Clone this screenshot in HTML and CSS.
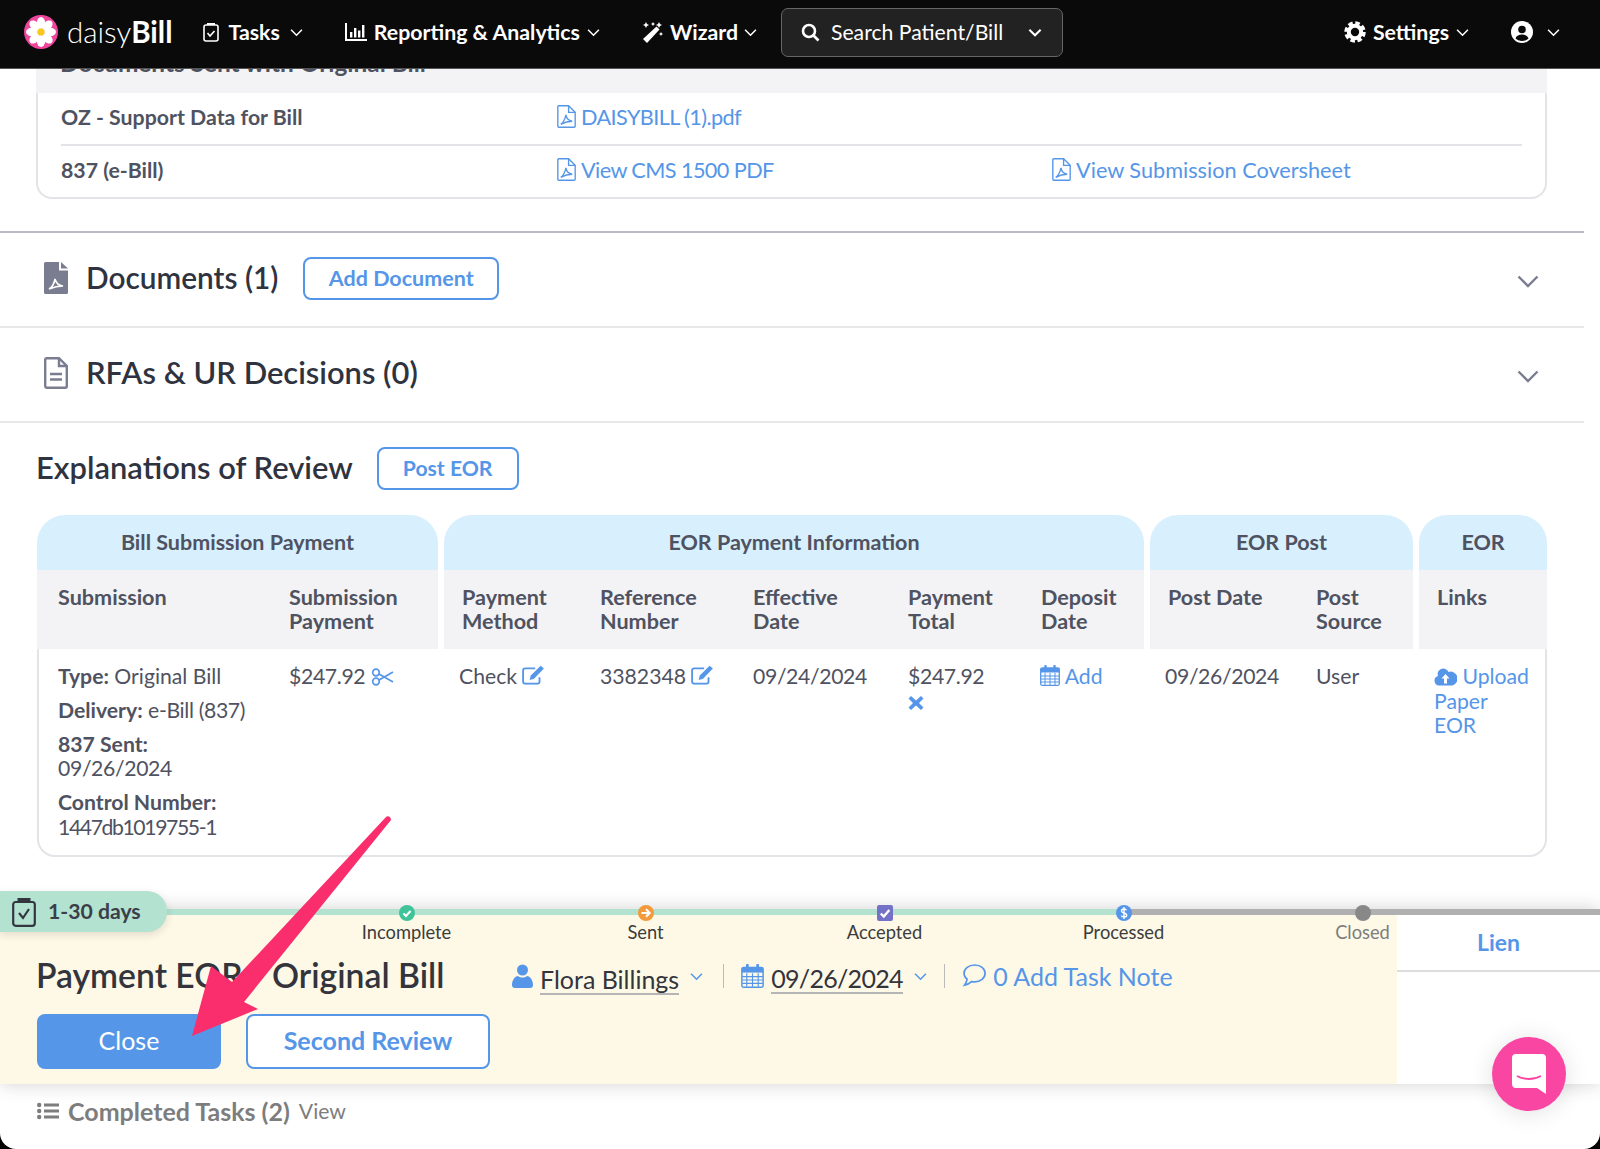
FILE: index.html
```html
<!DOCTYPE html>
<html>
<head>
    <meta charset="utf-8" />
    <title>daisyBill - Bill</title>
    <link rel="stylesheet" href="styles.css">
</head>
<body>
<div class="page">
    <nav class="navbar">
        <a class="brand">
            <svg class="logo" viewBox="0 0 34 34">
                <circle cx="17" cy="17" r="17" fill="#f0459d"/>
                <g fill="#fff">
                    <ellipse cx="17" cy="8" rx="4.2" ry="6"/>
                    <ellipse cx="17" cy="26" rx="4.2" ry="6"/>
                    <ellipse cx="8" cy="17" rx="6" ry="4.2"/>
                    <ellipse cx="26" cy="17" rx="6" ry="4.2"/>
                    <ellipse cx="10.6" cy="10.6" rx="4.2" ry="6" transform="rotate(-45 10.6 10.6)"/>
                    <ellipse cx="23.4" cy="10.6" rx="4.2" ry="6" transform="rotate(45 23.4 10.6)"/>
                    <ellipse cx="10.6" cy="23.4" rx="4.2" ry="6" transform="rotate(45 10.6 23.4)"/>
                    <ellipse cx="23.4" cy="23.4" rx="4.2" ry="6" transform="rotate(-45 23.4 23.4)"/>
                </g>
                <circle cx="17" cy="17" r="3.6" fill="#f7c91c"/>
            </svg>
            <span class="brand-name">daisy<b>Bill</b></span>
        </a>
        <a class="nav-item nav-tasks">
            <svg width="16" height="20" viewBox="0 0 16 20" fill="none" stroke="#fff" stroke-width="1.6"><rect x="1" y="3" width="14" height="16" rx="2"/><path d="M5 3V2h6v1" stroke-width="2"/><path d="M4.5 11l2.5 3 4.5-5"/></svg>
            Tasks
            <svg class="chev" viewBox="0 0 12 8"><path d="M1 1.5l5 5 5-5"/></svg>
        </a>
        <a class="nav-item nav-reports">
            <svg width="22" height="18" viewBox="0 0 22 18" fill="#fff"><path d="M0 0h2v16h20v2H0z"/><path d="M5 9h2.4v5.5H5zM9 5h2.4v9.500H9zM13 7.500h2.400v7H13zM17 2h2.400v12.500H17z"/></svg>
            Reporting &amp; Analytics
            <svg class="chev" viewBox="0 0 12 8"><path d="M1 1.5l5 5 5-5"/></svg>
        </a>
        <a class="nav-item nav-wizard">
            <svg width="23" height="23" viewBox="0 0 23 23" fill="#fff"><path d="M15.500 5.500l3 3L6 22l-4-4z"/><path d="M5 1l1 2 2 1-2 1-1 2-1-2-2-1 2-1zM12 1l.7 1.300L14 3l-1.300.7L12 5l-.7-1.300L10 3l1.300-.7zM20 11l.7 1.300L22 13l-1.300.7L20 15l-.7-1.300L18 13l1.300-.7z"/><path d="M18 1l1 2 2 1-2 1-1 2-1-2-2-1 2-1z"/></svg>
            Wizard
            <svg class="chev" viewBox="0 0 12 8"><path d="M1 1.5l5 5 5-5"/></svg>
        </a>
        <div class="nav-search">
            <svg width="19" height="19" viewBox="0 0 19 19" fill="none" stroke="#fff" stroke-width="2.600"><circle cx="8" cy="8" r="6"/><path d="M12.500 12.500l5 5"/></svg>
            <span>Search Patient/Bill</span>
            <svg class="chev chev-search" viewBox="0 0 12 8"><path d="M1 1.5l5 5 5-5"/></svg>
        </div>
        <a class="nav-item nav-settings">
            <svg width="22" height="22" viewBox="0 0 22 22"><circle cx="11" cy="11" r="6.200" fill="none" stroke="#fff" stroke-width="4"/><circle cx="11" cy="11" r="9" fill="none" stroke="#fff" stroke-width="3.500" stroke-dasharray="4.500 2.570"/></svg>
            Settings
            <svg class="chev" viewBox="0 0 12 8"><path d="M1 1.5l5 5 5-5"/></svg>
        </a>
        <a class="nav-item nav-user">
            <svg width="22" height="22" viewBox="0 0 22 22"><circle cx="11" cy="11" r="11" fill="#fff"/><circle cx="11" cy="8.500" r="3.800" fill="#0a0a0a"/><path d="M4.500 17.500c1-3 3.500-4 6.500-4s5.500 1 6.500 4c-1.700 1.500-4 2.500-6.500 2.500s-4.800-1-6.500-2.500z" fill="#0a0a0a"/></svg>
            <svg class="chev" viewBox="0 0 12 8"><path d="M1 1.5l5 5 5-5"/></svg>
        </a>
    </nav>

    <main class="content">
        <div class="doc-card">
            <div class="doc-card-head">Documents Sent with Original Bill</div>
            <div class="doc-row doc-row-line">
                <strong>OZ - Support Data for Bill</strong>
                <a class="link tight"><svg class="pdf-icon" viewBox="0 0 18 22"><use href="#pdf-outline"/></svg>DAISYBILL (1).pdf</a>
            </div>
            <div class="doc-row doc-row-last">
                <strong>837 (e-Bill)</strong>
                <a class="link tight"><svg class="pdf-icon" viewBox="0 0 18 22"><use href="#pdf-outline"/></svg>View CMS 1500 PDF</a>
                <a class="link"><svg class="pdf-icon" viewBox="0 0 18 22"><use href="#pdf-outline"/></svg>View Submission Coversheet</a>
            </div>
        </div>

        <section class="fold fold-first">
            <svg class="fold-icon" viewBox="0 0 24 32"><path d="M1.500 0H15v8.500h9V30.500a1.500 1.500 0 0 1-1.500 1.500h-21A1.500 1.500 0 0 1 0 30.500V1.500A1.500 1.500 0 0 1 1.500 0zM17 0l7 6.500h-7z" fill="#7a7d90"/><path d="M5 27c3-1.500 5-5 6-10 1 4 3 6.500 8 7-4 0-8 .5-14 3z" fill="none" stroke="#fff" stroke-width="1.600"/></svg>
            <h2 class="h2-docs">Documents (1)</h2>
            <a class="btn-outline btn-doc">Add Document</a>
            <svg class="fold-chev" viewBox="0 0 22 13"><path d="M1.500 1.500L11 11l9.500-9.500"/></svg>
        </section>
        <section class="fold">
            <svg class="fold-icon" viewBox="0 0 24 32" fill="none" stroke="#7a7d90" stroke-width="2.400"><path d="M2.500 1.200H15L22.800 9v20.300a1.500 1.500 0 0 1-1.500 1.500H2.500A1.500 1.500 0 0 1 1.200 29.300V2.700a1.500 1.500 0 0 1 1.300-1.500z"/><path d="M15 1.200V9h7.800M6 17h12M6 22.500h12"/></svg>
            <h2>RFAs &amp; UR Decisions (0)</h2>
            <svg class="fold-chev" viewBox="0 0 22 13"><path d="M1.500 1.500L11 11l9.500-9.500"/></svg>
        </section>

        <section class="eor">
            <div class="eor-title">
                <h2>Explanations of Review</h2>
                <a class="btn-outline">Post EOR</a>
            </div>
            <div class="eor-table">
                <div class="eor-group group-bill">
                    <div class="group-head">Bill Submission Payment</div>
                    <div class="group-sub"><span>Submission</span><span>Submission Payment</span></div>
                    <div class="group-body">
                        <div class="meta">
                            <p><strong>Type:</strong> Original Bill</p>
                            <p><strong>Delivery:</strong> <span class="num">e-Bill (837)</span></p>
                            <p><strong>837 Sent:</strong><br><span class="num">09/26/2024</span></p>
                            <p><strong>Control Number:</strong><br><span class="num-tight">1447db1019755-1</span></p>
                        </div>
                        <div class="nowrap"><span class="num">$247.92</span>
                            <svg class="ico" width="23" height="18" viewBox="0 0 23 18" fill="none" stroke="#5596e8" stroke-width="1.700"><circle cx="5" cy="4.500" r="3.300"/><circle cx="5" cy="13.500" r="3.300"/><path d="M8 6l14 8M8 12l14-8"/></svg>
                        </div>
                    </div>
                </div>
                <div class="eor-group group-payment">
                    <div class="group-head">EOR Payment Information</div>
                    <div class="group-sub"><span>Payment Method</span><span>Reference Number</span><span>Effective Date</span><span>Payment Total</span><span>Deposit Date</span></div>
                    <div class="group-body">
                        <div class="nudge nowrap">Check <svg class="ico ico-edit" width="23" height="20" viewBox="0 0 21 18"><use href="#edit"/></svg></div>
                        <div class="nowrap">3382348 <svg class="ico ico-edit" width="23" height="20" viewBox="0 0 21 18"><use href="#edit"/></svg></div>
                        <div class="num">09/24/2024</div>
                        <div><span class="num">$247.92</span><br><svg class="ico" width="16" height="16" viewBox="0 0 16 16"><path d="M3 1l5 4.500L13 1l2.500 2.500L11 8l4.500 4.500L13 15l-5-4.500L3 15 .5 12.500 5 8 .5 3.500z" fill="#5596e8"/></svg></div>
                        <div class="deposit"><a class="link"><svg class="ico" width="20" height="21" viewBox="0 0 20 21"><use href="#calendar"/></svg> Add</a></div>
                    </div>
                </div>
                <div class="eor-group group-post">
                    <div class="group-head">EOR Post</div>
                    <div class="group-sub"><span>Post Date</span><span>Post Source</span></div>
                    <div class="group-body">
                        <div class="nudge num">09/26/2024</div>
                        <div>User</div>
                    </div>
                </div>
                <div class="eor-group group-links">
                    <div class="group-head">EOR</div>
                    <div class="group-sub"><span>Links</span></div>
                    <div class="group-body">
                        <div class="nudge"><a class="link"><svg class="ico" width="23" height="18" viewBox="0 0 23 18"><path d="M5 17.500a4.800 4.800 0 0 1-1-9.400 5.500 5.500 0 0 1 5-7.500c2.500 0 4.500 1.300 5.500 3.300A5.500 5.500 0 0 1 18.500 17.500z" fill="#5596e8"/><path d="M11.500 6l-4 4.500h2.500v5h3v-5h2.500z" fill="#fff"/></svg> Upload Paper EOR</a></div>
                    </div>
                </div>
            </div>
        </section>

        <section class="task-panel">
            <div class="track"></div>
            <div class="task-age">
                <svg width="24" height="30" viewBox="0 0 24 30" fill="none" stroke="#33363f" stroke-width="2.200"><rect x="1.200" y="5" width="21.600" height="23.800" rx="2.500"/><path d="M7 5V2.500h10V5" stroke-width="3"/><path d="M7 16l4 5 6-9"/></svg>
                1-30 days
            </div>
            <div class="task-row">
                <div class="task-main">
                    <div class="stops">
                        <div class="stop">
                            <svg viewBox="0 0 16 16"><circle cx="8" cy="8" r="8" fill="#41c39a"/><path d="M4.500 8.500l2.500 2.500 4.500-5" fill="none" stroke="#fff" stroke-width="2"/></svg>
                            Incomplete
                        </div>
                        <div class="stop">
                            <svg viewBox="0 0 16 16"><circle cx="8" cy="8" r="8" fill="#f39a3c"/><path d="M3.500 8h8M8 4.200L11.800 8 8 11.800" fill="none" stroke="#fff" stroke-width="2"/></svg>
                            Sent
                        </div>
                        <div class="stop">
                            <svg viewBox="0 0 16 16"><rect width="16" height="16" rx="2" fill="#7472c8"/><path d="M3.800 8.500l3 3 5.500-6.500" fill="none" stroke="#fff" stroke-width="2.400"/></svg>
                            Accepted
                        </div>
                        <div class="stop">
                            <svg viewBox="0 0 16 16"><circle cx="8" cy="8" r="8" fill="#5596e8"/><path d="M10.500 5.300C10 4.300 9 4 8 4 6.500 4 5.500 4.800 5.500 6S6.500 7.600 8 8s2.700 1 2.700 2.200S9.500 12 8 12c-1.100 0-2.100-.4-2.700-1.400M8 2v12" fill="none" stroke="#fff" stroke-width="1.400"/></svg>
                            Processed
                        </div>
                        <div class="stop stop-off">
                            <svg viewBox="0 0 16 16"><circle cx="8" cy="8" r="8" fill="#888"/></svg>
                            Closed
                        </div>
                    </div>
                    <div class="task-head">
                        <h1>Payment EOR - Original Bill</h1>
                        <div class="task-meta">
                            <svg class="ico" width="21" height="24" viewBox="0 0 21 24" fill="#5596e8"><circle cx="10.500" cy="6" r="5.500"/><path d="M0 21c0-5 3-9 6-9 1.300 1 2.800 1.500 4.500 1.500S13.700 13 15 12c3 0 6 4 6 9 0 2-1 3-3 3H3c-2 0-3-1-3-3z"/></svg>
                            <span class="under">Flora Billings</span>
                            <svg class="chev chev-blue" viewBox="0 0 12 8"><path d="M1 1.5l5 5 5-5"/></svg>
                            <i class="sep"></i>
                            <svg class="ico" width="23" height="24" viewBox="0 0 20 21"><use href="#calendar"/></svg>
                            <span class="under under-date">09/26/2024</span>
                            <svg class="chev chev-blue" viewBox="0 0 12 8"><path d="M1 1.5l5 5 5-5"/></svg>
                            <i class="sep sep-note"></i>
                            <a class="link"><svg class="ico" width="25" height="25" viewBox="0 0 25 25" fill="none" stroke="#5596e8" stroke-width="1.700"><path d="M12.800 2C6.800 2 2 5.600 2 10.300c0 2.300 1.200 4.400 3.100 5.900-.2 2-1.200 4-2.600 6 2.800-.6 5.300-2 7-3.600 1 .2 2.100.3 3.300.3 5.700 0 10.300-3.800 10.300-8.600S18.500 2 12.800 2z"/></svg> 0 Add Task Note</a>
                        </div>
                    </div>
                    <div class="task-actions">
                        <a class="btn-solid">Close</a>
                        <a class="btn-outline btn-big">Second Review</a>
                    </div>
                </div>
                <aside class="lien-tab">
                    <div class="lien-label">Lien</div>
                </aside>
            </div>
        </section>

        <div class="completed">
            <svg width="22" height="18" viewBox="0 0 22 18" fill="#7d7d7d"><path d="M7 1.500h15v3H7zM7 7.500h15v3H7zM7 13.500h15v3H7z"/><circle cx="2.200" cy="3" r="2.200"/><circle cx="2.200" cy="9" r="2.200"/><circle cx="2.200" cy="15" r="2.200"/></svg>
            <strong>Completed Tasks (2)</strong> <span>View</span>
        </div>
    </main>

    <svg class="pointer" width="1600" height="1149" viewBox="0 0 1600 1149"><path d="M386 817c2-2 5 0 5 3L244 1002l14 7-66 27 19-70 21 16z" fill="#fb2e6d"/></svg>

    <div class="chat-btn">
        <svg width="34" height="40" viewBox="0 0 34 40"><path d="M4 0h26a4 4 0 0 1 4 4v36l-9-6H4a4 4 0 0 1-4-4V4a4 4 0 0 1 4-4z" fill="#fff"/><path d="M5 22c7 4 17 4 24 0" fill="none" stroke="#f946a3" stroke-width="2"/></svg>
    </div>
</div>

<svg width="0" height="0" class="defs">
    <symbol id="pdf-outline" viewBox="0 0 18 22">
        <g fill="none" stroke="#5596e8" stroke-width="1.300"><path d="M1.700.7H11L17.300 7v13.300a1 1 0 0 1-1 1H1.700a1 1 0 0 1-1-1V1.700a1 1 0 0 1 1-1z"/><path d="M11 .7V7h6.300M3.500 18.500c2.500-1.500 4-4.500 5-9 .5 3.500 2.500 5.500 6 6-3.500 0-7 .7-11 3z"/></g>
    </symbol>
    <symbol id="edit" viewBox="0 0 21 18">
        <path d="M16 11v4a2 2 0 0 1-2 2H3a2 2 0 0 1-2-2V5a2 2 0 0 1 2-2h9" fill="none" stroke="#5596e8" stroke-width="1.700"/>
        <path d="M17 .5l3 2.500-9 9.500-4 1 1-4z" fill="#5596e8"/>
    </symbol>
    <symbol id="calendar" viewBox="0 0 20 21">
        <rect x=".7" y="3" width="18.600" height="17.300" rx="1.500" fill="none" stroke="#5596e8" stroke-width="1.300"/>
        <path d="M.7 3h18.600v4.500H.7z" fill="#5596e8"/>
        <path d="M5.500 1v5M14.500 1v5" stroke="#5596e8" stroke-width="2.400" stroke-linecap="round"/>
        <path d="M1 11h18M1 14h18M1 17h18M5 8v12M10 8v12M15 8v12" stroke="#5596e8" stroke-width="1"/>
    </symbol>
</svg>
</body>
</html>
```

FILE: styles.css
```css
* {
    padding: 0;
    margin: 0;
    box-sizing: border-box;
}

html {
    background: #000;
}

body {
    font-family: "Lato", "Liberation Sans", sans-serif;
    font-size: 21.2px;
    line-height: 24.5px;
    color: #4f5261;
    overflow: hidden;
}

.defs {
    position: absolute;
}

.page {
    position: relative;
    height: 1149px;
    overflow: hidden;
    background: white;
    border-radius: 0 0 16px 16px;
}

.link {
    color: #5596e8;
}

strong {
    font-weight: 700;
}

.nowrap {
    white-space: nowrap;
}

.num {
    letter-spacing: -0.35px;
}

.num-tight {
    letter-spacing: -1.4px;
}

.ico {
    vertical-align: -2px;
}

.ico-edit {
    vertical-align: -1px;
}

/* top bar */
.navbar {
    position: absolute;
    top: 0;
    left: 0;
    right: 0;
    z-index: 5;
    height: 69px;
    padding: 0 40px 4px 24px;
    display: flex;
    align-items: center;
    background: #0a0a0a;
    border-bottom: 1px solid #555;
}

.brand {
    display: flex;
    align-items: center;
    gap: 9px;
}

.logo {
    width: 34px;
    height: 34px;
}

.brand-name {
    font-size: 29.5px;
    font-weight: 300;
    color: white;
}

.brand-name b {
    font-weight: 700;
}

.nav-item {
    display: flex;
    align-items: center;
    gap: 9px;
    font-size: 21.3px;
    font-weight: 700;
    color: white;
}

.nav-tasks { margin-left: 30px; gap: 10px; }
.nav-reports { margin-left: 42px; gap: 7px; }
.nav-wizard { margin-left: 41px; gap: 6px; }
.nav-settings { margin-left: auto; gap: 7px; }
.nav-user { margin-left: 42px; gap: 14px; }

.chev {
    width: 13px;
    height: 9px;
    fill: none;
    stroke: white;
    stroke-width: 1.4;
}

.chev-blue {
    stroke: #5596e8;
    margin-left: 11px;
}

.nav-search {
    margin-left: 24px;
    width: 282px;
    height: 49px;
    padding: 0 20px 0 19px;
    display: flex;
    align-items: center;
    gap: 11px;
    color: white;
    background: #222;
    border: 1px solid #666;
    border-radius: 7px;
}

.chev-search {
    margin-left: auto;
    width: 14px;
    stroke-width: 1.8;
}

/* documents card */
.content {
    width: 1584px;
    padding-top: 40px;
}

.doc-card {
    width: 1511px;
    margin-left: 36px;
    height: 159px;
    border: 2px solid #e3e3e8;
    border-top: 0;
    border-radius: 0 0 16px 16px;
}

.doc-card-head {
    height: 53px;
    padding: 11px 0 0 24px;
    margin-left: -2px;
    margin-right: -2px;
    font-size: 24.4px;
    font-weight: 700;
    background: #f3f3f5;
}

.doc-row {
    margin: 0 23px;
    height: 52px;
    display: grid;
    grid-template-columns: 496px 495px 1fr;
    align-items: center;
    font-size: 21.7px;
}

.doc-row strong {
    font-size: 21.3px;
}

.doc-row-line {
    height: 53px;
    padding-bottom: 3px;
    border-bottom: 2px solid #e3e3e8;
}

.doc-row-last {
    padding-bottom: 3px;
}

.tight {
    letter-spacing: -0.6px;
}

.pdf-icon {
    width: 19px;
    height: 23px;
    margin-right: 5px;
    vertical-align: -3px;
}

/* collapsed sections */
.fold {
    height: 95px;
    padding: 0 44px 3px;
    display: flex;
    align-items: center;
    border-bottom: 2px solid #e8e8ea;
}

.fold-first {
    margin-top: 32px;
    height: 97px;
    border-top: 2px solid #b9bcc8;
}

.fold-icon {
    width: 24px;
    height: 32px;
    margin-right: 18px;
}

h2 {
    font-size: 30.9px;
    line-height: 36px;
    font-weight: 600;
    color: #2f3340;
}

.h2-docs {
    font-size: 29.8px;
}

.btn-outline {
    height: 43px;
    padding: 0 24px;
    display: flex;
    align-items: center;
    font-weight: 700;
    color: #5596e8;
    background: white;
    border: 2px solid #5596e8;
    border-radius: 8px;
}

.btn-doc {
    padding: 0 23.5px;
    font-size: 21.5px;
}

.fold .btn-outline {
    margin-left: 25px;
}

.fold-chev {
    width: 22px;
    height: 13px;
    margin-left: auto;
    margin-right: 1px;
    margin-top: 6px;
    fill: none;
    stroke: #7a7d90;
    stroke-width: 2.4;
}

/* EOR table */
.eor {
    padding: 24px 0 0 36px;
}

.eor-title {
    display: flex;
    align-items: center;
    gap: 24px;
    height: 43px;
}

.eor-title h2 {
    margin-top: -1px;
}

.eor-table {
    width: 1510px;
    height: 342px;
    margin: 25px 0 0 1px;
    display: flex;
}

.eor-group {
    display: flex;
    flex-direction: column;
}

.group-bill { width: 404px; }
.group-payment { width: 706px; }
.group-post { width: 269px; }
.group-links { width: 131px; }

.group-head {
    height: 55px;
    margin: 0 3px;
    display: flex;
    align-items: center;
    justify-content: center;
    font-size: 21.5px;
    font-weight: 700;
    background: #d8effe;
    border-radius: 28px 28px 0 0;
}

.group-bill .group-head,
.group-bill .group-sub {
    margin-left: 0;
}

.group-links .group-head,
.group-links .group-sub {
    margin-right: 0;
}

.group-sub {
    height: 79px;
    margin: 0 3px;
    padding: 15px 0 0 18px;
    display: grid;
    font-size: 21.6px;
    line-height: 24px;
    font-weight: 700;
    background: #f3f3f5;
}

.group-sub span {
    max-width: 118px;
}

.group-bill .group-sub {
    padding-left: 21px;
}

.group-body {
    flex: 1;
    padding: 15px 0 0 21px;
    display: grid;
    border-bottom: 2px solid #e3e3e8;
}

.group-bill .group-body {
    border-left: 2px solid #e3e3e8;
    border-bottom-left-radius: 18px;
    padding-left: 19px;
}

.group-links .group-body {
    padding-right: 16px;
    border-right: 2px solid #e3e3e8;
    border-bottom-right-radius: 18px;
}

.deposit {
    margin-left: -1px;
}

.group-bill .group-sub,
.group-bill .group-body {
    grid-template-columns: 231px 1fr;
}

.group-payment .group-sub,
.group-payment .group-body {
    grid-template-columns: 138px 153px 155px 133px 1fr;
}

.group-post .group-sub,
.group-post .group-body {
    grid-template-columns: 148px 1fr;
}

.nudge {
    margin-left: -3px;
}

.meta p {
    margin-bottom: 9.4px;
}

/* task panel at the bottom */
.task-panel {
    position: relative;
    width: 1600px;
    margin-top: 52px;
    padding-top: 6px;
    box-shadow: 0 0 18px rgba(0, 0, 0, 0.18);
    background: white;
}

.track {
    position: absolute;
    top: 0;
    left: 0;
    right: 0;
    height: 6px;
    background: linear-gradient(to right, #b3e2d0 1124px, #b0b0b0 1124px);
}

.task-age {
    position: absolute;
    top: -18px;
    left: 0;
    width: 167px;
    height: 41px;
    padding-left: 12px;
    display: flex;
    align-items: center;
    gap: 12px;
    z-index: 2;
    font-weight: 700;
    color: #3c3f4a;
    background: #b3e2d0;
    border-radius: 0 20px 20px 0;
    box-shadow: 0 3px 8px rgba(0, 0, 0, 0.12);
}

.task-row {
    display: flex;
    height: 169px;
}

.task-main {
    position: relative;
    width: 1397px;
    padding: 0 0 0 36px;
    background: #fef9e7;
}

.stops {
    position: relative;
    margin: -10px 0 0 251px;
    display: flex;
}

.stop {
    flex: none;
    width: 239px;
    display: flex;
    flex-direction: column;
    align-items: center;
    font-size: 18.3px;
    line-height: 22px;
    color: #3c3c3c;
}

.stop svg {
    width: 16px;
    height: 16px;
}

.stop-off {
    color: #7d7d7d;
}

.task-head {
    margin-top: 13px;
    height: 40px;
    display: flex;
    align-items: center;
}

h1 {
    width: 476px;
    margin-top: -2px;
    font-size: 33.7px;
    line-height: 40px;
    font-weight: 600;
    color: #33343c;
}

.task-meta {
    display: flex;
    align-items: center;
    font-size: 25px;
    color: #33343c;
}

.under {
    margin: 7px 0 0 7px;
    line-height: 28px;
    border-bottom: 2px solid #b5b5b5;
}

.under-date {
    margin-top: 5px;
    letter-spacing: -0.7px;
}

.sep {
    width: 1px;
    height: 24px;
    margin: 0 17px 0 20px;
    background: #bbb;
}

.sep-note {
    margin-left: 17px;
}

.task-actions {
    margin-top: 18px;
    margin-left: 1px;
    display: flex;
    gap: 25px;
}

.btn-solid {
    width: 184px;
    height: 55px;
    padding-bottom: 2px;
    display: flex;
    align-items: center;
    justify-content: center;
    font-size: 25px;
    color: white;
    background: #5596e8;
    border-radius: 8px;
}

.btn-big {
    width: 244px;
    height: 55px;
    justify-content: center;
    padding: 0 0 2px;
    font-size: 25px;
}

.lien-tab {
    flex: 1;
    background: white;
}

.lien-label {
    height: 57px;
    display: flex;
    align-items: center;
    justify-content: center;
    font-size: 23px;
    font-weight: 700;
    color: #5596e8;
    border-bottom: 2px solid #ddd;
}

.completed {
    padding: 15px 0 0 37px;
    display: flex;
    align-items: center;
    gap: 9px;
    color: #7d7d7d;
}

.completed strong {
    font-size: 25px;
}

/* things lying over the page */
.pointer {
    position: absolute;
    top: 0;
    left: 0;
    z-index: 6;
    pointer-events: none;
}

.chat-btn {
    position: absolute;
    left: 1492px;
    top: 1037px;
    z-index: 6;
    width: 74px;
    height: 74px;
    display: flex;
    align-items: center;
    justify-content: center;
    background: #f946a3;
    border-radius: 50%;
    box-shadow: 0 2px 24px rgba(0, 0, 0, 0.12);
}
```
